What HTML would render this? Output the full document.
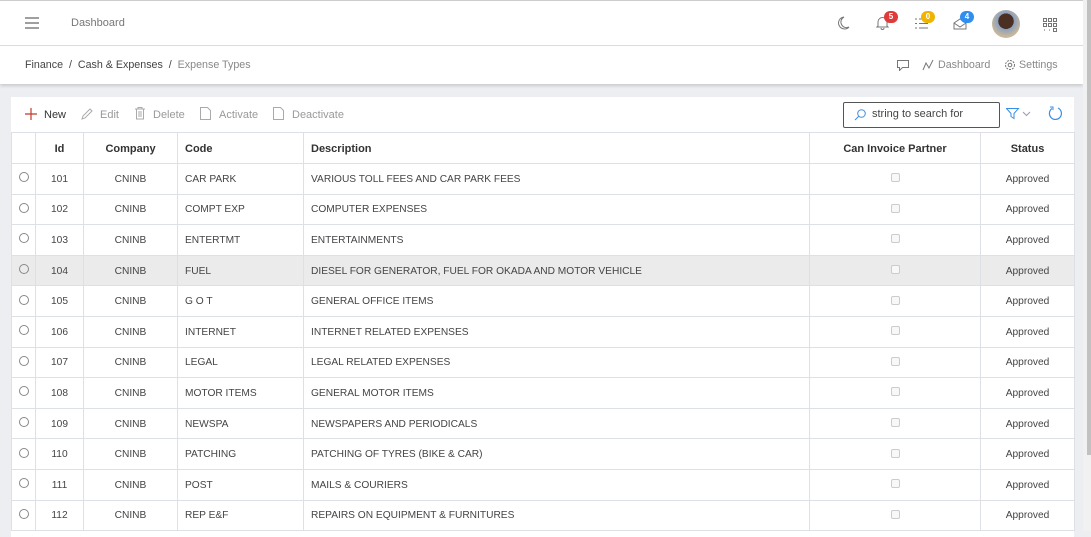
<!DOCTYPE html><html><head><style>
*{box-sizing:border-box;margin:0;padding:0}
body{width:1091px;height:531px;overflow:hidden;background:#eceef1;font-family:"Liberation Sans",sans-serif;font-size:11px;color:#444;position:relative}
.hdr{position:absolute;left:0;top:0;width:1083px;height:46px;background:#fff;border-top:1px solid #ccc;border-bottom:1px solid #ddd}
.bc{position:absolute;left:0;top:46px;width:1083px;height:38px;background:#fff;box-shadow:0 2px 3px rgba(0,0,0,.15);font-size:10.7px}
.sb{position:absolute;right:0;top:0;width:8px;height:531px;background:#f1f1f1}
.sb div{position:absolute;right:0;top:0;width:4px;height:455px;background:#c1c1c1}
.card{position:absolute;left:11px;top:97px;width:1063px;height:440px;background:#fff}
.tb{height:35px;position:relative}
.tb span{position:absolute;top:12px;color:#999;font-size:11px}
table{border-collapse:collapse;width:1063px;position:absolute;top:35px;left:0;table-layout:fixed}
td,th{border:1px solid #dde0e4;height:30.6px;font-size:10.2px;padding:1px 7px 0;white-space:nowrap;overflow:hidden;color:#444}
th{font-weight:bold;color:#333;height:31px;font-size:11px}
.c{text-align:center}
tr.sel td{background:#ebebeb}
.rad{display:inline-block;width:10px;height:10px;border:1px solid #888;border-radius:50%}
.cb{display:inline-block;width:9px;height:9px;border:1px solid #ccc;border-radius:2px;background:#f8f8f8}
.badge{position:absolute;width:14px;height:12px;border-radius:6px;color:#fff;font-size:8px;font-weight:bold;text-align:center;line-height:12px}
</style></head><body>
<div class="hdr">
<svg style="position:absolute;left:25px;top:16px" width="14" height="12"><path d="M0 1h14M0 6h14M0 11h14" stroke="#666" stroke-width="1.3"/></svg>
<span style="position:absolute;left:71px;top:16px;color:#777;font-size:11px">Dashboard</span>
<svg style="position:absolute;left:836px;top:15px" width="14" height="15"><path d="M8 1A6 6 0 1 0 13 11A5 5 0 0 1 8 1Z" fill="none" stroke="#777" stroke-width="1"/></svg>
<svg style="position:absolute;left:876px;top:15px" width="13" height="14"><path d="M2 10V6a4.5 4.5 0 0 1 9 0v4l1 1H1zM5 12a1.5 1.5 0 0 0 3 0" fill="none" stroke="#777"/></svg>
<div class="badge" style="left:884px;top:10px;background:#e03b3b">5</div>
<svg style="position:absolute;left:915px;top:16px" width="13" height="13"><path d="M0 2h2M4 2h9M0 6.5h2M4 6.5h9M0 11h2M4 11h9" stroke="#777"/></svg>
<div class="badge" style="left:921px;top:10px;background:#f0b400">0</div>
<svg style="position:absolute;left:953px;top:17px" width="14" height="12"><path d="M1 5L7 1l6 4v6H1zM1 5l6 4 6-4" fill="none" stroke="#777"/></svg>
<div class="badge" style="left:960px;top:10px;background:#2f8ef0">4</div>
<div style="position:absolute;left:992px;top:9px;width:28px;height:28px;border-radius:50%;background:radial-gradient(circle at 50% 40%,#4a2f22 35%,#8aa0c0 36%,#c9b89a 70%)"></div>
<svg style="position:absolute;left:1043px;top:17px" width="14" height="14"><g fill="none" stroke="#666" stroke-width="0.9"><rect x="0.5" y="0.5" width="3" height="3"/><rect x="5.5" y="0.5" width="3" height="3"/><rect x="10.5" y="0.5" width="3" height="3"/><rect x="0.5" y="5.5" width="3" height="3"/><rect x="5.5" y="5.5" width="3" height="3"/><rect x="10.5" y="5.5" width="3" height="3"/><rect x="10.5" y="10.5" width="3" height="3"/></g><path d="M1 12h1M6 12h1" stroke="#666"/></svg>
</div>
<div class="bc">
<span style="position:absolute;left:25px;top:13px;color:#444">Finance &nbsp;/&nbsp; Cash &amp; Expenses &nbsp;/&nbsp; <span style="color:#888">Expense Types</span></span>
<svg style="position:absolute;left:897px;top:14px" width="12" height="11"><path d="M.5 .5h11v7h-6l-3 3v-3H.5z" fill="none" stroke="#777"/></svg>
<svg style="position:absolute;left:922px;top:13px" width="12" height="12"><path d="M1 11L4 4l3 5 4-8" fill="none" stroke="#777"/></svg>
<span style="position:absolute;left:938px;top:13px;color:#888">Dashboard</span>
<svg style="position:absolute;left:1004px;top:13px" width="12" height="12"><circle cx="6" cy="6" r="4.5" fill="none" stroke="#777" stroke-dasharray="2 1"/><circle cx="6" cy="6" r="1.8" fill="none" stroke="#777"/></svg>
<span style="position:absolute;left:1019px;top:13px;color:#888">Settings</span>
</div>
<div class="card">
<div class="tb">
<svg style="position:absolute;left:14px;top:11px" width="12" height="12"><path d="M6 0v12M0 6h12" stroke="#c0392b" stroke-width="1.2"/></svg>
<span style="left:33px;color:#333">New</span>
<svg style="position:absolute;left:70px;top:11px" width="12" height="12"><path d="M1 11l1-3 7-7 2 2-7 7z" fill="none" stroke="#aaa"/></svg>
<span style="left:89px">Edit</span>
<svg style="position:absolute;left:124px;top:10px" width="10" height="13"><path d="M0 2h10M3 2V.5h4V2M1.5 2v10h7V2M4 4v6M6 4v6" fill="none" stroke="#aaa"/></svg>
<span style="left:142px">Delete</span>
<svg style="position:absolute;left:189px;top:10px" width="11" height="13"><path d="M.5.5h7l3 3v9H.5z" fill="none" stroke="#aaa"/></svg>
<span style="left:208px">Activate</span>
<svg style="position:absolute;left:262px;top:10px" width="11" height="13"><path d="M.5.5h7l3 3v9H.5z" fill="none" stroke="#aaa"/></svg>
<span style="left:281px">Deactivate</span>
<div style="position:absolute;left:832px;top:5px;width:157px;height:26px;border:1px solid #555;border-radius:2px"></div>
<svg style="position:absolute;left:843px;top:12px" width="12" height="12"><circle cx="7.5" cy="4.5" r="3.8" fill="none" stroke="#3a8ee6"/><path d="M5 7L1 11" stroke="#3a8ee6"/></svg>
<span style="left:861px;top:11px;color:#444">string to search for</span>
<svg style="position:absolute;left:995px;top:11px" width="28" height="12"><path d="M.5.5h12l-4.5 5v5l-3-2v-3z" fill="none" stroke="#3a8ee6"/><path d="M17 4l3.5 3.5L24 4" fill="none" stroke="#99b"/></svg>
<svg style="position:absolute;left:1037px;top:9px" width="15" height="15"><path d="M4 2.5A6 6 0 1 0 10 2" fill="none" stroke="#3a8ee6" stroke-width="1.2"/><path d="M2 1h3v3" fill="none" stroke="#3a8ee6"/></svg>
</div>
<table>
<colgroup><col style="width:24px"><col style="width:48px"><col style="width:94px"><col style="width:126px"><col style="width:506px"><col style="width:171px"><col style="width:94px"></colgroup>
<tr><th></th><th class="c">Id</th><th class="c">Company</th><th style="text-align:left">Code</th><th style="text-align:left">Description</th><th class="c">Can Invoice Partner</th><th class="c">Status</th></tr>
<tr><td class="c" style="padding:0"><span class="rad"></span></td><td class="c">101</td><td class="c">CNINB</td><td>CAR PARK</td><td>VARIOUS TOLL FEES AND CAR PARK FEES</td><td class="c"><span class="cb"></span></td><td class="c">Approved</td></tr>
<tr><td class="c" style="padding:0"><span class="rad"></span></td><td class="c">102</td><td class="c">CNINB</td><td>COMPT EXP</td><td>COMPUTER EXPENSES</td><td class="c"><span class="cb"></span></td><td class="c">Approved</td></tr>
<tr><td class="c" style="padding:0"><span class="rad"></span></td><td class="c">103</td><td class="c">CNINB</td><td>ENTERTMT</td><td>ENTERTAINMENTS</td><td class="c"><span class="cb"></span></td><td class="c">Approved</td></tr>
<tr class="sel"><td class="c" style="padding:0"><span class="rad"></span></td><td class="c">104</td><td class="c">CNINB</td><td>FUEL</td><td>DIESEL FOR GENERATOR, FUEL FOR OKADA AND MOTOR VEHICLE</td><td class="c"><span class="cb"></span></td><td class="c">Approved</td></tr>
<tr><td class="c" style="padding:0"><span class="rad"></span></td><td class="c">105</td><td class="c">CNINB</td><td>G O T</td><td>GENERAL OFFICE ITEMS</td><td class="c"><span class="cb"></span></td><td class="c">Approved</td></tr>
<tr><td class="c" style="padding:0"><span class="rad"></span></td><td class="c">106</td><td class="c">CNINB</td><td>INTERNET</td><td>INTERNET RELATED EXPENSES</td><td class="c"><span class="cb"></span></td><td class="c">Approved</td></tr>
<tr><td class="c" style="padding:0"><span class="rad"></span></td><td class="c">107</td><td class="c">CNINB</td><td>LEGAL</td><td>LEGAL RELATED EXPENSES</td><td class="c"><span class="cb"></span></td><td class="c">Approved</td></tr>
<tr><td class="c" style="padding:0"><span class="rad"></span></td><td class="c">108</td><td class="c">CNINB</td><td>MOTOR ITEMS</td><td>GENERAL MOTOR ITEMS</td><td class="c"><span class="cb"></span></td><td class="c">Approved</td></tr>
<tr><td class="c" style="padding:0"><span class="rad"></span></td><td class="c">109</td><td class="c">CNINB</td><td>NEWSPA</td><td>NEWSPAPERS AND PERIODICALS</td><td class="c"><span class="cb"></span></td><td class="c">Approved</td></tr>
<tr><td class="c" style="padding:0"><span class="rad"></span></td><td class="c">110</td><td class="c">CNINB</td><td>PATCHING</td><td>PATCHING OF TYRES (BIKE &amp; CAR)</td><td class="c"><span class="cb"></span></td><td class="c">Approved</td></tr>
<tr><td class="c" style="padding:0"><span class="rad"></span></td><td class="c">111</td><td class="c">CNINB</td><td>POST</td><td>MAILS &amp; COURIERS</td><td class="c"><span class="cb"></span></td><td class="c">Approved</td></tr>
<tr><td class="c" style="padding:0"><span class="rad"></span></td><td class="c">112</td><td class="c">CNINB</td><td>REP E&amp;F</td><td>REPAIRS ON EQUIPMENT &amp; FURNITURES</td><td class="c"><span class="cb"></span></td><td class="c">Approved</td></tr>
</table>
</div>
<div class="sb"><div></div></div>
</body></html>
